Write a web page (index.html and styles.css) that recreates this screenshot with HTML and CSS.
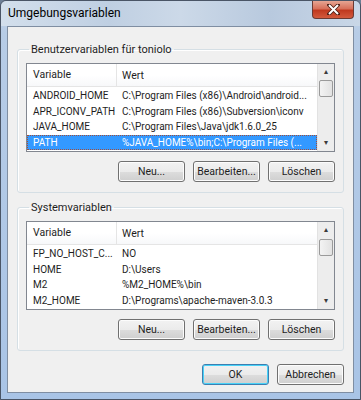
FILE: index.html
```html
<!DOCTYPE html>
<html lang="de">
<head>
    <meta charset="UTF-8">
    <title>Umgebungsvariablen</title>
    <link rel="stylesheet" href="styles.css">
</head>
<body>
    <div class="window">
        <div class="titlebar">
            <span class="title">Umgebungsvariablen</span>
            <span class="close">
                <svg width="13" height="11" viewBox="0 0 13 11">
                    <path d="M2 1 L11 10 M11 1 L2 10" stroke="#4a1d14" stroke-width="3.6" stroke-linecap="square"/>
                    <path d="M2 1 L11 10 M11 1 L2 10" stroke="#fff" stroke-width="2"/>
                </svg>
            </span>
        </div>
        <div class="client">
            <fieldset class="group">
                <legend>Benutzervariablen für toniolo</legend>
                <div class="list">
                    <div class="list-body">
                        <div class="row head">
                            <span class="c1">Variable</span>
                            <span class="c2">Wert</span>
                        </div>
                        <div class="row"><span class="c1">ANDROID_HOME</span><span class="c2">C:\Program Files (x86)\Android\android...</span></div>
                        <div class="row"><span class="c1">APR_ICONV_PATH</span><span class="c2">C:\Program Files (x86)\Subversion\iconv</span></div>
                        <div class="row"><span class="c1">JAVA_HOME</span><span class="c2">C:\Program Files\Java\jdk1.6.0_25</span></div>
                        <div class="row sel"><span class="c1">PATH</span><span class="c2">%JAVA_HOME%\bin;C:\Program Files (...</span></div>
                    </div>
                    <div class="scroll">
                        <span class="arrow up">&#9652;</span>
                        <span class="track top"><span class="thumb"></span></span>
                        <span class="arrow down">&#9662;</span>
                    </div>
                </div>
                <div class="buttons">
                    <button>Neu...</button>
                    <button>Bearbeiten...</button>
                    <button>Löschen</button>
                </div>
            </fieldset>

            <fieldset class="group">
                <legend>Systemvariablen</legend>
                <div class="list">
                    <div class="list-body">
                        <div class="row head">
                            <span class="c1">Variable</span>
                            <span class="c2">Wert</span>
                        </div>
                        <div class="row"><span class="c1">FP_NO_HOST_C...</span><span class="c2">NO</span></div>
                        <div class="row"><span class="c1">HOME</span><span class="c2">D:\Users</span></div>
                        <div class="row"><span class="c1">M2</span><span class="c2">%M2_HOME%\bin</span></div>
                        <div class="row"><span class="c1">M2_HOME</span><span class="c2">D:\Programs\apache-maven-3.0.3</span></div>
                    </div>
                    <div class="scroll">
                        <span class="arrow up">&#9652;</span>
                        <span class="track"><span class="thumb"></span></span>
                        <span class="arrow down">&#9662;</span>
                    </div>
                </div>
                <div class="buttons">
                    <button>Neu...</button>
                    <button>Bearbeiten...</button>
                    <button>Löschen</button>
                </div>
            </fieldset>

            <div class="buttons footer">
                <button class="default">OK</button>
                <button>Abbrechen</button>
            </div>
        </div>
    </div>
</body>
</html>
```

FILE: styles.css
```css
body {
    margin: 0;
    background: #6d7f96;
    font-family: Roboto, "Noto Sans", sans-serif;
    font-size: 11px;
    color: #1e1e1e;
}
.window {
    width: 359px;
    height: 398px;
    border: 1px solid #4a5566;
    border-radius: 6px 6px 0 0;
    background: linear-gradient(180deg, #c6d6e8 0%, #b7cce6 8%, #a9c4e6 100%);
    display: flex;
    flex-direction: column;
}
.titlebar {
    height: 25px;
    display: flex;
    justify-content: space-between;
    align-items: flex-start;
    background: linear-gradient(90deg, #d3dfec 0%, #bfcfe2 30%, #ccd9e8 50%, #b8c9de 75%, #c9d7e7 100%);
    border-radius: 6px 6px 0 0;
}
.title {
    padding: 5px 0 0 7px;
    font-size: 12px;
    color: #000;
}
.close {
    width: 42px;
    height: 18px;
    margin-right: 6px;
    border: 1px solid #6b3a33;
    border-top: none;
    border-radius: 0 0 4px 4px;
    background: linear-gradient(180deg, #e6a593 0%, #d7705a 45%, #c0391f 55%, #d35a3d 100%);
    display: flex;
    align-items: center;
    justify-content: center;
    box-sizing: border-box;
}
.client {
    flex: 1;
    margin: 0 6px 6px 6px;
    border: 1px solid #7f8ea2;
    background: #f0f0f0;
    padding: 16px 9px 0 9px;
    display: flex;
    flex-direction: column;
    min-width: 0;
}
.group {
    min-width: 0;
    margin: 0 0 8px 0;
    padding: 7px 8px 10px 8px;
    border: 1px solid #d5dfe5;
    border-radius: 3px;
    box-shadow: inset 1px 1px 0 #fff;
}
.group legend {
    padding: 0 2px;
    margin-left: 3px;
}
.list {
    height: 87px;
    border: 1px solid #828790;
    background: #fff;
    display: flex;
    font-size: 10px;
}
.list-body {
    flex: 1;
    min-width: 0;
    overflow: hidden;
}
.row {
    display: flex;
    height: 15.5px;
    align-items: center;
    white-space: nowrap;
}
.row.head {
    height: 22px;
    border-bottom: 1px solid #e5e5e5;
    margin-bottom: 1px;
    background: linear-gradient(180deg, #fff 0%, #fff 50%, #f7f8fa 100%);
    font-size: 10.5px;
}
.c1 {
    width: 84px;
    padding-left: 6px;
    flex-shrink: 0;
    overflow: hidden;
}
.head .c1 {
    height: 22px;
    line-height: 22px;
    border-right: 1px solid #e5e5e5;
    width: 83px;
}
.c2 {
    padding-left: 5px;
    overflow: hidden;
}
.row.sel {
    background: #3399ff;
    color: #fff;
    outline: 1px dotted #a14f3a;
    outline-offset: -1px;
}
.scroll {
    width: 16px;
    flex-shrink: 0;
    background: #ededed;
    border-left: 1px solid #e2e2e2;
    display: flex;
    flex-direction: column;
    color: #3b3b3b;
}
.arrow {
    height: 16px;
    font-size: 8px;
    line-height: 16px;
    text-align: center;
}
.track {
    flex: 1;
}
.thumb {
    display: block;
    height: 15px;
    margin: 1px 1px 0 1px;
    border: 1px solid #9a9a9a;
    border-radius: 2px;
    background: linear-gradient(90deg, #f3f3f3, #e2e2e2);
}
.track.top .thumb {
    margin-top: 0;
}
.buttons {
    display: flex;
    justify-content: flex-end;
    gap: 8px;
    margin-top: 9px;
}
button {
    width: 67px;
    height: 21px;
    padding: 0;
    font-family: inherit;
    font-size: 10.5px;
    color: #1e1e1e;
    border: 1px solid #707070;
    border-radius: 3px;
    background: linear-gradient(180deg, #f2f2f2 0%, #ebebeb 50%, #dddddd 51%, #cfcfcf 100%);
    box-shadow: inset 0 0 0 1px #fcfcfc;
}
button.default {
    border-color: #3c7fb1;
    box-shadow: inset 0 0 0 1px #48d2f8;
}
.footer {
    margin-top: 5px;
}
```
